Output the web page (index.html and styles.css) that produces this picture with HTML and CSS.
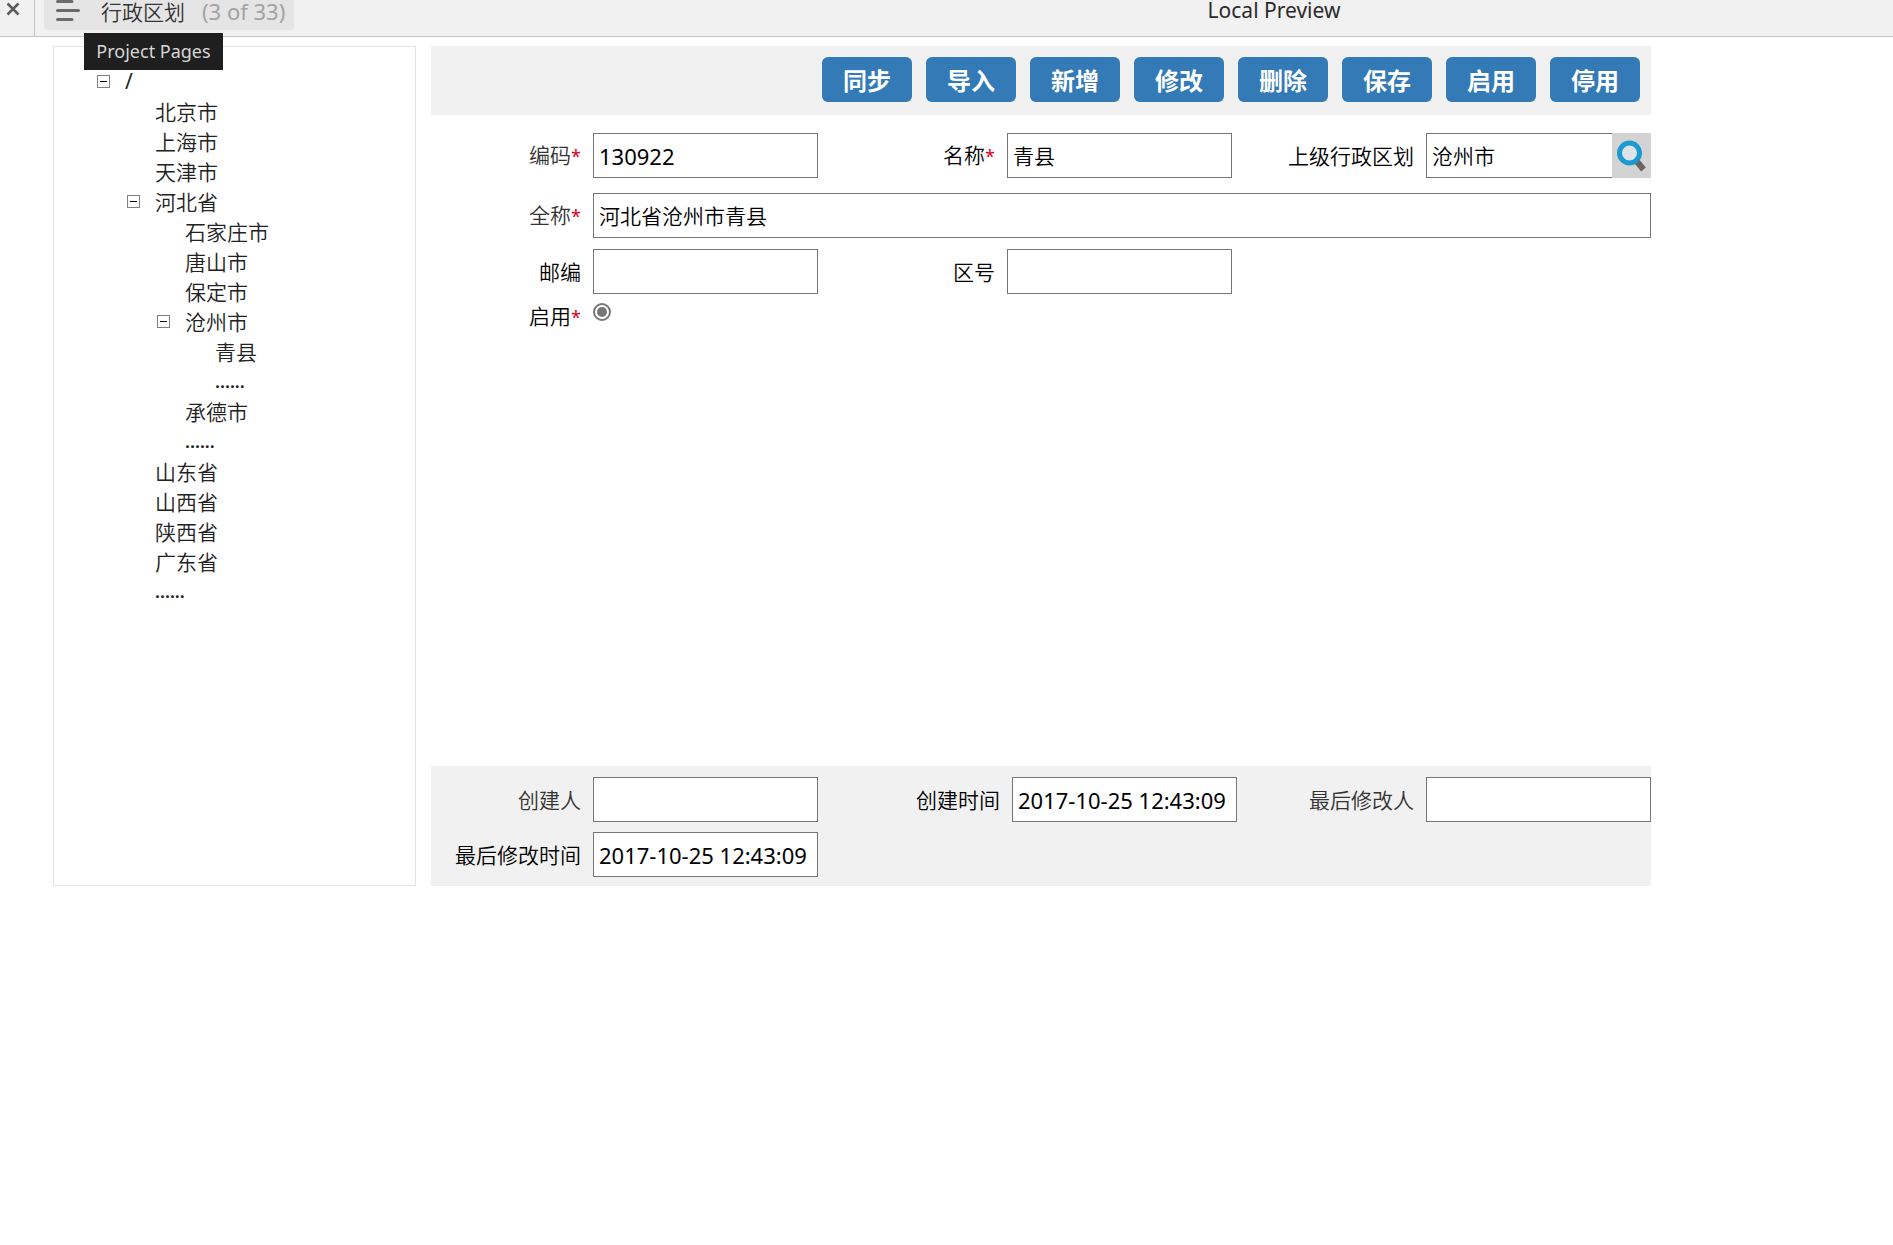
FILE: index.html
```html
<!DOCTYPE html>
<html lang="zh-CN">
<head>
<meta charset="utf-8">
<title>行政区划</title>
<link rel="stylesheet" href="styles.css">
</head>
<body>
<header class="topbar">
  <div class="topbar-left">
    <button class="close" type="button" aria-label="Close">
      <svg width="14" height="14" viewBox="0 0 14 14"><path d="M1.500 1.500L12.500 12.500M12.500 1.500L1.500 12.500" stroke="#5c5c5c" stroke-width="2.500" fill="none"/></svg>
    </button>
    <button class="pages" type="button">
      <svg width="24" height="22" viewBox="0 0 24 22"><path d="M1.500 1.500H16M1.500 10.500H22.500M1.500 19.500H16" stroke="#6b6b6b" stroke-width="3" stroke-linecap="round" fill="none"/></svg>
      <span class="page-name">行政区划</span>
      <span class="page-count">(3 of 33)</span>
    </button>
    <div class="tooltip" role="tooltip">Project Pages</div>
  </div>
  <div class="preview-title">Local Preview</div>
</header>

<div class="layout">
  <nav class="sidebar">
    <ul class="tree">
      <li>
        <div class="node"><button class="toggle" type="button" aria-label="折叠"></button><span class="latin">/</span></div>
        <ul>
          <li><div class="node leaf">北京市</div></li>
          <li><div class="node leaf">上海市</div></li>
          <li><div class="node leaf">天津市</div></li>
          <li>
            <div class="node"><button class="toggle" type="button" aria-label="折叠"></button>河北省</div>
            <ul>
              <li><div class="node leaf">石家庄市</div></li>
              <li><div class="node leaf">唐山市</div></li>
              <li><div class="node leaf">保定市</div></li>
              <li>
                <div class="node"><button class="toggle" type="button" aria-label="折叠"></button>沧州市</div>
                <ul>
                  <li><div class="node leaf">青县</div></li>
                  <li><div class="node leaf more">......</div></li>
                </ul>
              </li>
              <li><div class="node leaf">承德市</div></li>
              <li><div class="node leaf more">......</div></li>
            </ul>
          </li>
          <li><div class="node leaf">山东省</div></li>
          <li><div class="node leaf">山西省</div></li>
          <li><div class="node leaf">陕西省</div></li>
          <li><div class="node leaf">广东省</div></li>
          <li><div class="node leaf more">......</div></li>
        </ul>
      </li>
    </ul>
  </nav>

  <main class="content">
    <div class="toolbar">
      <button class="btn" type="button">同步</button>
      <button class="btn" type="button">导入</button>
      <button class="btn" type="button">新增</button>
      <button class="btn" type="button">修改</button>
      <button class="btn" type="button">删除</button>
      <button class="btn" type="button">保存</button>
      <button class="btn" type="button">启用</button>
      <button class="btn" type="button">停用</button>
    </div>

    <form class="details">
      <div class="row">
        <label class="soft" for="code">编码<span class="req">*</span></label>
        <input class="field numeric" id="code" type="text" value="130922">
        <label for="name">名称<span class="req">*</span></label>
        <input class="field" id="name" type="text" value="青县">
        <label for="parent">上级行政区划</label>
        <div class="lookup">
          <input class="field" id="parent" type="text" value="沧州市">
          <button class="search" type="button" aria-label="查找">
            <svg width="30" height="34" viewBox="0 0 30 34"><path d="M19.500 22L26.500 30.500" stroke="#6a6462" stroke-width="6" fill="none"/><circle cx="12.500" cy="14" r="10" fill="#dde3e6" stroke="#1b9ad2" stroke-width="5"/></svg>
          </button>
        </div>
      </div>
      <div class="row">
        <label class="soft" for="fullname">全称<span class="req">*</span></label>
        <input class="field wide" id="fullname" type="text" value="河北省沧州市青县">
      </div>
      <div class="row tight">
        <label for="zip">邮编</label>
        <input class="field" id="zip" type="text">
        <label for="area">区号</label>
        <input class="field" id="area" type="text">
      </div>
      <div class="row radio-row">
        <label for="enabled">启用<span class="req">*</span></label>
        <input class="radio" id="enabled" type="radio" checked>
      </div>
    </form>

    <form class="audit">
      <div class="row">
        <label class="soft" for="creator">创建人</label>
        <input class="field" id="creator" type="text">
        <label for="created">创建时间</label>
        <input class="field numeric" id="created" type="text" value="2017-10-25 12:43:09">
        <label class="soft" for="editor">最后修改人</label>
        <input class="field" id="editor" type="text">
      </div>
      <div class="row">
        <label for="edited">最后修改时间</label>
        <input class="field numeric" id="edited" type="text" value="2017-10-25 12:43:09">
      </div>
    </form>
  </main>
</div>
</body>
</html>
```

FILE: styles.css
```css
* {
  box-sizing: border-box;
}

body {
  margin: 0;
  background: #fff;
  color: #000;
  font-family: "Noto Sans CJK SC", sans-serif;
  font-size: 21px;
  font-weight: 350;
  line-height: 30px;
}

button,
input {
  margin: 0;
  padding: 0;
  border: 0;
  background: none;
  color: inherit;
  font: inherit;
}

ul {
  margin: 0;
  padding: 0;
  list-style: none;
}

/* Top bar */
.topbar {
  display: flex;
  height: 37px;
  background: #f1f1f1;
  border-bottom: 1px solid #c4c4c4;
}

.topbar-left {
  position: relative;
  display: flex;
  align-items: flex-start;
  width: 655px;
}

.close {
  display: flex;
  justify-content: center;
  width: 35px;
  height: 36px;
  padding: 2px 8px 0 0;
  border-right: 1px solid #c4c4c4;
}

.pages {
  display: flex;
  align-items: flex-start;
  width: 250px;
  height: 30px;
  margin-left: 9px;
  padding-left: 12px;
  border-radius: 0 0 4px 4px;
  background: #e5e5e5;
  line-height: 22px;
  white-space: nowrap;
}

.page-name {
  margin-left: 21px;
  color: #333;
}

.page-count {
  margin-left: 17px;
  color: #a3a3a3;
  font-family: "Noto Sans", sans-serif;
  font-size: 22px;
  font-weight: 400;
}

.tooltip {
  position: absolute;
  left: 84px;
  top: 33px;
  width: 139px;
  height: 37px;
  background: #1f1f1f;
  color: #d6d6d6;
  font-family: "Noto Sans", sans-serif;
  font-size: 18px;
  font-weight: 400;
  line-height: 37px;
  text-align: center;
  white-space: nowrap;
}

.preview-title {
  flex: 1;
  color: #2b2b2b;
  font-family: "Noto Sans", sans-serif;
  font-weight: 400;
  line-height: 20px;
  text-align: center;
}

/* Page */
.layout {
  display: flex;
  gap: 15px;
  min-height: 849px;
  padding: 9px 242px 0 53px;
}

.sidebar {
  flex: 0 0 363px;
  padding: 19px 0 0 43px;
  border: 1px solid #e4e4e4;
}

.tree ul {
  padding-left: 30px;
}

.node {
  display: flex;
  align-items: center;
  gap: 15px;
  height: 30px;
  color: #222;
}

.leaf {
  padding-left: 28px;
}

.latin {
  font-family: "Noto Sans", sans-serif;
  font-weight: 400;
}

.more {
  font-family: "Noto Sans", sans-serif;
  font-size: 18px;
  font-weight: 600;
}

.toggle {
  display: flex;
  align-items: center;
  justify-content: center;
  width: 13px;
  height: 13px;
  border: 1px solid #808080;
}

.toggle::before {
  content: "";
  width: 7px;
  height: 1px;
  background: #000;
}

.content {
  display: flex;
  flex: 1;
  flex-direction: column;
  min-width: 0;
}

.toolbar {
  display: flex;
  justify-content: flex-end;
  gap: 14px;
  height: 69px;
  padding: 11px 11px 0 0;
  background: #f1f1f1;
}

.btn {
  width: 90px;
  height: 45px;
  border-radius: 6px;
  background: #337ab7;
  color: #fff;
  font-size: 24px;
  font-weight: 700;
}

/* Forms */
.details {
  flex: 1;
  padding-top: 18px;
}

.row {
  display: grid;
  grid-template-columns: 162px 225px 189fr 225px 194fr 225px;
  align-items: center;
}

.details .row {
  margin-bottom: 15px;
}

.row label {
  padding: 0 12px 2px 0;
  text-align: right;
  white-space: nowrap;
}

.row .soft {
  color: #333;
}

.details .tight {
  margin-top: -4px;
  margin-bottom: 6px;
}

.req {
  color: #d9001b;
  font-family: "Noto Sans", sans-serif;
  font-weight: 400;
  font-size: 18px;
}

.field {
  width: 100%;
  height: 45px;
  padding: 0 5px 2px;
  border: 1px solid #767676;
  background: #fff;
  color: #000;
}

.numeric {
  padding-bottom: 0;
  font-family: "Noto Sans", sans-serif;
  font-size: 22px;
  font-weight: 400;
}

.wide {
  grid-column: 2 / -1;
}

.lookup {
  display: flex;
}

.lookup .field {
  flex: 1;
  min-width: 0;
  border-right: 0;
}

.search {
  display: flex;
  flex: 0 0 39px;
  align-items: center;
  justify-content: center;
  height: 45px;
  background: #d3d3d3;
}

.radio {
  display: flex;
  align-items: center;
  justify-content: center;
  width: 18px;
  height: 18px;
  border: 2px solid #767676;
  border-radius: 50%;
  appearance: none;
}

.radio:checked::before {
  content: "";
  width: 10px;
  height: 10px;
  border-radius: 50%;
  background: #767676;
}

.radio-row {
  align-items: start;
}

.radio-row .radio {
  margin-top: 3px;
}

.audit {
  display: grid;
  gap: 10px;
  padding: 11px 0 9px;
  background: #f1f1f1;
}

.audit .row {
  grid-template-columns: 162px 225px 194fr 225px 189fr 225px;
}
```
